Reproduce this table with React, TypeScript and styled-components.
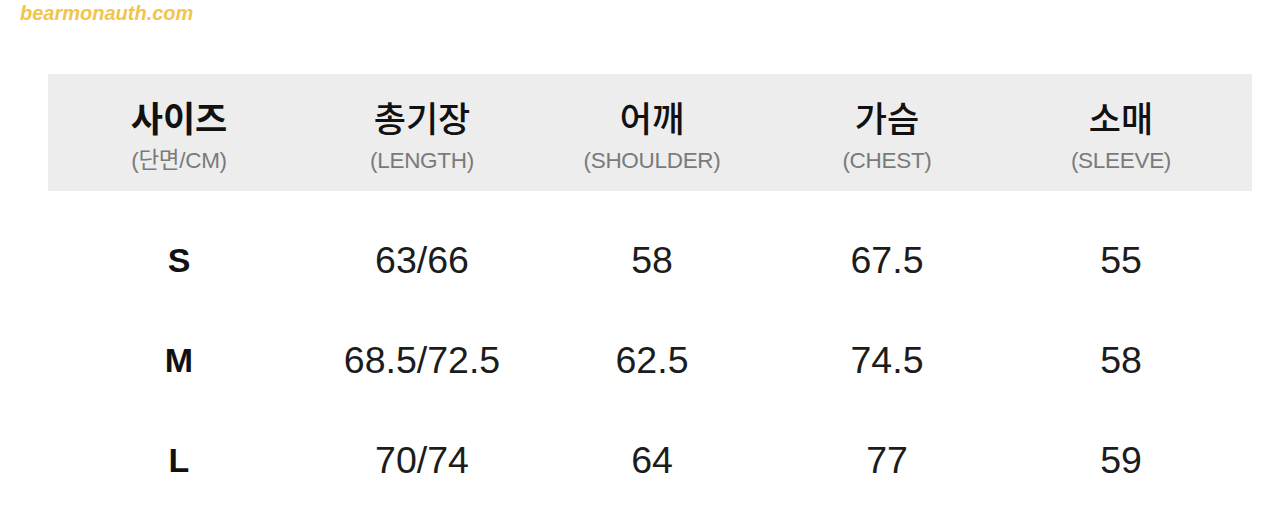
import React from "react";
import styled, { createGlobalStyle } from "styled-components";

const Global = createGlobalStyle`
  html, body { margin: 0; padding: 0; background: #ffffff; }
  body { font-family: "Liberation Sans", Arial, "Noto Sans CJK KR", sans-serif; }
`;

const Page = styled.div`
  width: 1280px;
  height: 516px;
  overflow: hidden;
  background: #ffffff;
  display: flex;
  flex-direction: column;
`;

const Watermark = styled.div`
  padding-left: 20px;
  height: 26px;
  line-height: 26px;
  font-family: "Liberation Sans", Arial, sans-serif;
  font-weight: 700;
  font-style: italic;
  font-size: 20px;
  color: #f1c54c;
`;

const Table = styled.div`
  margin: 48px 28px 0 48px;
  display: flex;
  flex-direction: column;
`;

const cols = "262px 224px 236px 234px 234px";

const HeaderRow = styled.div`
  display: grid;
  grid-template-columns: ${cols};
  background: #ededed;
  height: 117px;
  box-sizing: border-box;
  padding-top: 22px;
`;

const HeadCell = styled.div`
  display: flex;
  flex-direction: column;
  align-items: center;
`;

const HeadTitle = styled.div<{ $strong?: boolean }>`
  font-family: "Noto Sans CJK KR", "Liberation Sans", sans-serif;
  font-size: 35px;
  line-height: 42px;
  font-weight: ${(p) => (p.$strong ? 700 : 500)};
  color: #111111;
`;

const HeadSub = styled.div`
  font-family: "Liberation Sans", Arial, "Noto Sans CJK KR", sans-serif;
  font-size: 22.5px;
  line-height: 26px;
  margin-top: 10px;
  color: #7a7a7a;
  letter-spacing: -0.3px;
`;

const Body = styled.div`
  padding-top: 19px;
  display: flex;
  flex-direction: column;
`;

const DataRow = styled.div`
  display: grid;
  grid-template-columns: ${cols};
  height: 100px;
  align-items: center;
`;

const SizeCell = styled.div`
  text-align: center;
  font-family: "Liberation Sans", Arial, sans-serif;
  font-weight: 700;
  font-size: 34px;
  color: #111111;
`;

const ValueCell = styled.div`
  text-align: center;
  font-family: "Liberation Sans", Arial, sans-serif;
  font-size: 37.5px;
  color: #1c1c1c;
`;

const headers = [
  { title: "사이즈", sub: "(단면/CM)", strong: true },
  { title: "총기장", sub: "(LENGTH)" },
  { title: "어깨", sub: "(SHOULDER)" },
  { title: "가슴", sub: "(CHEST)" },
  { title: "소매", sub: "(SLEEVE)" },
];

const rows = [
  ["S", "63/66", "58", "67.5", "55"],
  ["M", "68.5/72.5", "62.5", "74.5", "58"],
  ["L", "70/74", "64", "77", "59"],
];

export default function App() {
  return (
    <Page>
      <Global />
      <Watermark>bearmonauth.com</Watermark>
      <Table>
        <HeaderRow>
          {headers.map((h) => (
            <HeadCell key={h.title}>
              <HeadTitle $strong={h.strong}>{h.title}</HeadTitle>
              <HeadSub>{h.sub}</HeadSub>
            </HeadCell>
          ))}
        </HeaderRow>
        <Body>
          {rows.map((r) => (
            <DataRow key={r[0]}>
              <SizeCell>{r[0]}</SizeCell>
              {r.slice(1).map((v, i) => (
                <ValueCell key={i}>{v}</ValueCell>
              ))}
            </DataRow>
          ))}
        </Body>
      </Table>
    </Page>
  );
}
